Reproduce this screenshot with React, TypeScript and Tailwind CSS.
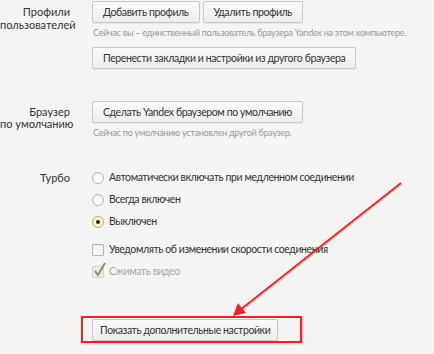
import React from "react";

const Btn = ({ children, px = "px-[10px]" }: { children: React.ReactNode; px?: string }) => (
  <button
    className={
      "h-[22px] rounded-[2px] border border-[#c9c9c9] bg-gradient-to-b from-[#fbfbfb] to-[#ededed] text-[10.5px] tracking-[-0.4px] leading-none text-[#333] shadow-[0_1px_0_rgba(0,0,0,0.05)] whitespace-nowrap " +
      px
    }
  >
    {children}
  </button>
);

const Hint = ({ children }: { children: React.ReactNode }) => (
  <p className="text-[9px] tracking-[-0.25px] leading-[10px] text-[#9a9a9a] mt-[5px] ml-[1px] whitespace-nowrap">
    {children}
  </p>
);

const Radio = ({ checked, label }: { checked?: boolean; label: string }) => (
  <div className="flex items-center h-[22px] gap-[5px]">
    <span
      className={
        "w-[12px] h-[12px] rounded-full border flex items-center justify-center " +
        (checked ? "border-[#b9a86a] bg-[#fbf4d6]" : "border-[#b4b4b4] bg-gradient-to-b from-[#f0f0f0] to-[#ffffff]")
      }
    >
      {checked && <span className="w-[4px] h-[4px] rounded-full bg-[#222]" />}
    </span>
    <span className="text-[10.5px] tracking-[-0.4px] text-[#333]">{label}</span>
  </div>
);

const Row = ({ label, className, children }: { label: React.ReactNode; className?: string; children: React.ReactNode }) => (
  <div className={"flex gap-[22px] " + (className ?? "")}>
    <div className="w-[70px] shrink-0 text-right text-[11px] text-[#333] whitespace-nowrap">{label}</div>
    <div className="flex flex-col items-start">{children}</div>
  </div>
);

export default function App() {
  return (
    <div
      className="relative w-[434px] h-[354px] overflow-hidden bg-[#f5f4f2] text-[#333]"
      style={{ fontFamily: 'Lato, "Open Sans", sans-serif' }}
    >
      <div className="flex flex-col pt-[1px]">
        <Row
          label={
            <div className="leading-[13px] pt-[4px]">
              Профили
              <br />
              пользователей
            </div>
          }
        >
          <div className="flex gap-[3px]">
            <Btn>Добавить профиль</Btn>
            <Btn>Удалить профиль</Btn>
          </div>
          <Hint>Сейчас вы – единственный пользователь браузера Yandex на этом компьютере.</Hint>
          <div className="flex mt-[9px]">
            <Btn>Перенести закладки и настройки из другого браузера</Btn>
          </div>
        </Row>

        <Row
          className="mt-[32px]"
          label={
            <div className="leading-[12px] pt-[5px]">
              Браузер
              <br />
              по умолчанию
            </div>
          }
        >
          <Btn>Сделать Yandex браузером по умолчанию</Btn>
          <Hint>Сейчас по умолчанию установлен другой браузер.</Hint>
        </Row>

        <Row className="mt-[29px]" label={<div className="leading-[22px]">Турбо</div>}>
          <Radio label="Автоматически включать при медленном соединении" />
          <Radio label="Всегда включен" />
          <Radio checked label="Выключен" />
          <div className="flex items-center h-[21px] gap-[5px] mt-[6px]">
            <span className="w-[12px] h-[12px] rounded-[1px] border border-[#b4b4b4] bg-gradient-to-b from-[#f0f0f0] to-[#ffffff]" />
            <span className="text-[10.5px] tracking-[-0.4px] text-[#333]">Уведомлять об изменении скорости соединения</span>
          </div>
          <div className="flex items-center h-[21px] gap-[5px] mt-[1px]">
            <span className="relative w-[12px] h-[12px] rounded-[1px] border border-[#d8d5c5] bg-[#efecdc]">
              <svg className="absolute left-[0px] top-[-5px]" width="14" height="16" viewBox="0 0 14 16">
                <path d="M2 9 L5 13 L12 1" fill="none" stroke="#8d8a76" strokeWidth="2" />
              </svg>
            </span>
            <span className="text-[10.5px] tracking-[-0.4px] text-[#a7a7a7]">Сжимать видео</span>
          </div>
        </Row>

        {/* more settings */}
        <div className="mt-[34px] ml-[81px]">
          <div className="flex w-[221px] h-[27px] border-2 border-[#e4252b] pl-[9px] pt-[1px] shadow-[1px_1px_2px_rgba(0,0,0,0.25)]">
            <Btn px="px-[7px]">Показать дополнительные настройки</Btn>
          </div>
        </div>
      </div>

      {/* annotation arrow */}
      <svg className="absolute left-0 top-0 pointer-events-none" width="434" height="354">
        <line x1="401" y1="183" x2="240" y2="310" stroke="rgba(0,0,0,0.18)" strokeWidth="2" transform="translate(1 1)" />
        <line x1="401" y1="183" x2="240" y2="310" stroke="#e4252b" strokeWidth="1.6" />
        <polygon points="233,316 238,303 246,313" fill="#e4252b" />
      </svg>
    </div>
  );
}
